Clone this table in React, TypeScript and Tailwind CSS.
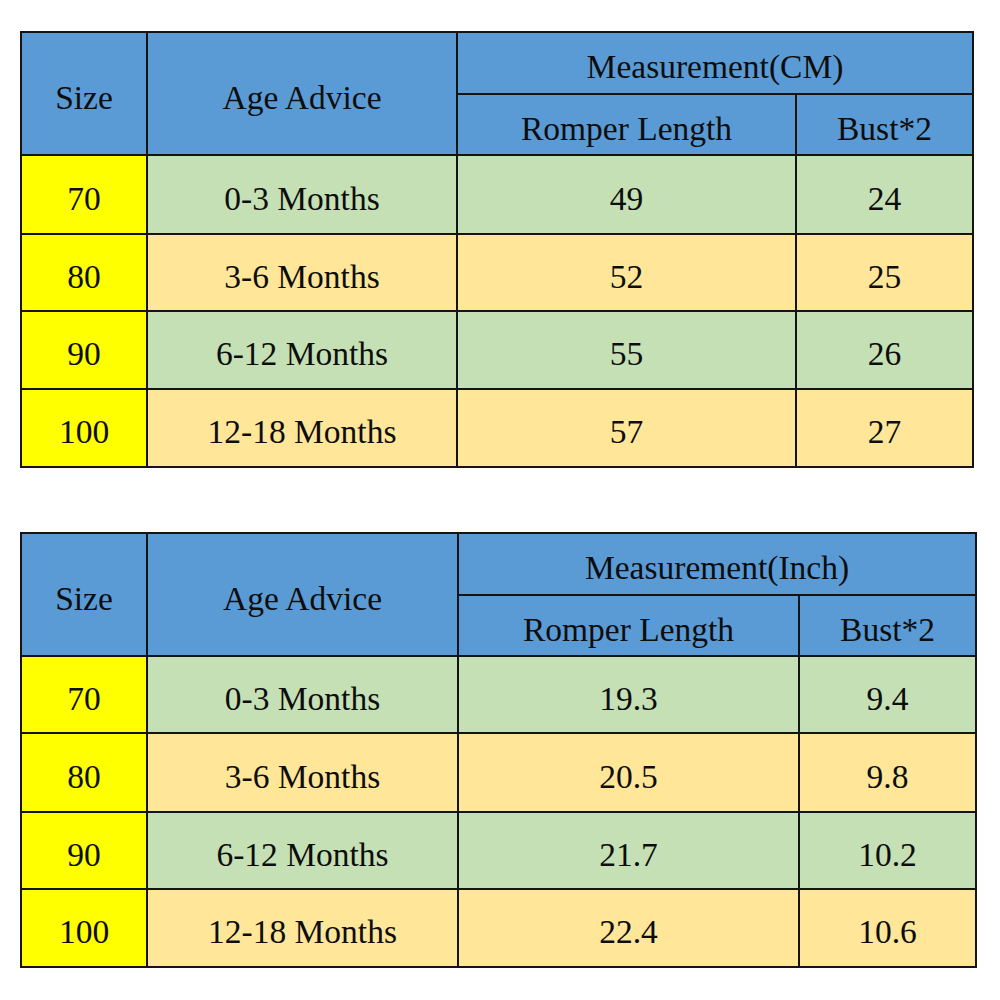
import React from "react";

type Row = { size: string; age: string; length: string; bust: string; tone: "green" | "orange" };

const cmRows: Row[] = [
  { size: "70", age: "0-3 Months", length: "49", bust: "24", tone: "green" },
  { size: "80", age: "3-6 Months", length: "52", bust: "25", tone: "orange" },
  { size: "90", age: "6-12 Months", length: "55", bust: "26", tone: "green" },
  { size: "100", age: "12-18 Months", length: "57", bust: "27", tone: "orange" },
];

const inchRows: Row[] = [
  { size: "70", age: "0-3 Months", length: "19.3", bust: "9.4", tone: "green" },
  { size: "80", age: "3-6 Months", length: "20.5", bust: "9.8", tone: "orange" },
  { size: "90", age: "6-12 Months", length: "21.7", bust: "10.2", tone: "green" },
  { size: "100", age: "12-18 Months", length: "22.4", bust: "10.6", tone: "orange" },
];

const cell = "border-2 border-[#141414] text-center align-middle p-0 pt-[8px]";

function SizeTable({ unit, rows, widths, heights }: { unit: string; rows: Row[]; widths: number[]; heights: number[] }) {
  return (
    <table
      className="border-collapse table-fixed font-['Liberation_Serif','Times_New_Roman',serif] text-[33.5px] leading-none text-[#0d0d0d]"
      style={{ width: widths.reduce((a, b) => a + b, 0) }}
    >
      <colgroup>
        {widths.map((w, i) => (
          <col key={i} style={{ width: w }} />
        ))}
      </colgroup>
      <tbody>
        <tr className="bg-[#5b9bd5]" style={{ height: heights[0] }}>
          <td rowSpan={2} className={cell}>Size</td>
          <td rowSpan={2} className={cell}>Age Advice</td>
          <td colSpan={2} className={cell}>Measurement({unit})</td>
        </tr>
        <tr className="bg-[#5b9bd5]" style={{ height: heights[1] }}>
          <td className={cell}>Romper Length</td>
          <td className={cell}>Bust*2</td>
        </tr>
        {rows.map((r, i) => (
          <tr key={r.size} style={{ height: heights[i + 2] }} className={r.tone === "green" ? "bg-[#c5e0b4]" : "bg-[#ffe699]"}>
            <td className={`${cell} bg-[#ffff00]`}>{r.size}</td>
            <td className={cell}>{r.age}</td>
            <td className={cell}>{r.length}</td>
            <td className={cell}>{r.bust}</td>
          </tr>
        ))}
      </tbody>
    </table>
  );
}

export default function App() {
  return (
    <div className="w-[1000px] h-[1000px] bg-white">
      <div className="flex flex-col gap-[64px] pt-[31px] pl-[20px]">
        <SizeTable unit="CM" rows={cmRows} widths={[126, 310, 339, 177]} heights={[62, 61, 79, 77, 78, 78]} />
        <SizeTable unit="Inch" rows={inchRows} widths={[126, 311, 341, 177]} heights={[62, 61, 77, 79, 77, 78]} />
      </div>
    </div>
  );
}
